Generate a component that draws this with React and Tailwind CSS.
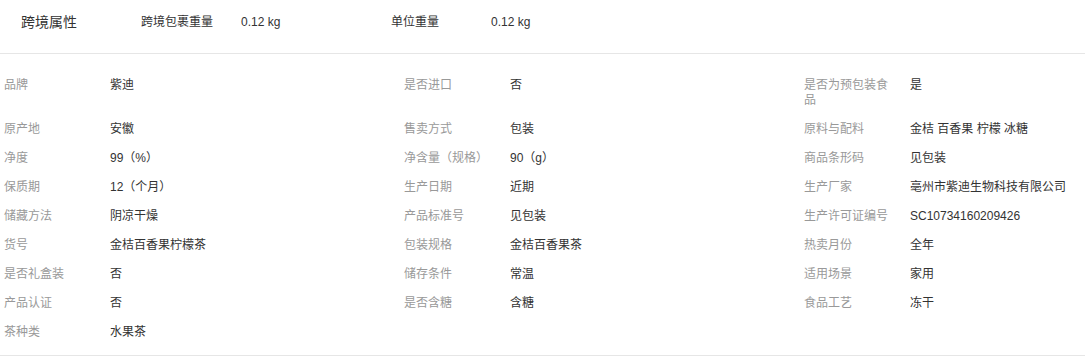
const rows = [
  [['品牌', '紫迪'], ['是否进口', '否'], ['是否为预包装食品', '是']],
  [['原产地', '安徽'], ['售卖方式', '包装'], ['原料与配料', '金桔 百香果 柠檬 冰糖']],
  [['净度', '99（%）'], ['净含量（规格）', '90（g）'], ['商品条形码', '见包装']],
  [['保质期', '12（个月）'], ['生产日期', '近期'], ['生产厂家', '亳州市紫迪生物科技有限公司']],
  [['储藏方法', '阴凉干燥'], ['产品标准号', '见包装'], ['生产许可证编号', 'SC10734160209426']],
  [['货号', '金桔百香果柠檬茶'], ['包装规格', '金桔百香果茶'], ['热卖月份', '全年']],
  [['是否礼盒装', '否'], ['储存条件', '常温'], ['适用场景', '家用']],
  [['产品认证', '否'], ['是否含糖', '含糖'], ['食品工艺', '冻干']],
  [['茶种类', '水果茶']],
];

const Cell = ({ item }) => {
  if (!item) return <div />;
  return (
    <div className="flex py-[7px] text-[12px] leading-[15px]">
      <div className="w-[90px] mr-[16px] shrink-0 text-[#999]">{item[0]}</div>
      <div className="text-[#333] whitespace-nowrap">{item[1]}</div>
    </div>
  );
};

export default function App() {
  return (
    <div className="w-[1085px] bg-white font-['Liberation_Sans','Noto_Sans_CJK_SC',sans-serif]">
      {/* cross-border attributes */}
      <div className="flex items-start h-[54px] border-b border-[#e6e6e6] pt-[14px]">
        <div className="w-[141px] pl-[21px] text-[14px] leading-[16px] text-[#333]">跨境属性</div>
        <div className="w-[100px] text-[12px] leading-[16px] text-[#333]">跨境包裹重量</div>
        <div className="w-[150px] text-[12px] leading-[16px] text-[#333]">0.12 kg</div>
        <div className="w-[100px] text-[12px] leading-[16px] text-[#333]">单位重量</div>
        <div className="w-[150px] text-[12px] leading-[16px] text-[#333]">0.12 kg</div>
      </div>

      {/* product attributes */}
      <div className="grid grid-cols-[400px_400px_1fr] pl-[4px] pt-[17px] pb-[8px] border-b border-[#e6e6e6]">
        {rows.map((row, i) => (
          <div key={i} className="contents">
            <Cell item={row[0]} />
            <Cell item={row[1]} />
            <Cell item={row[2]} />
          </div>
        ))}
      </div>
    </div>
  );
}
